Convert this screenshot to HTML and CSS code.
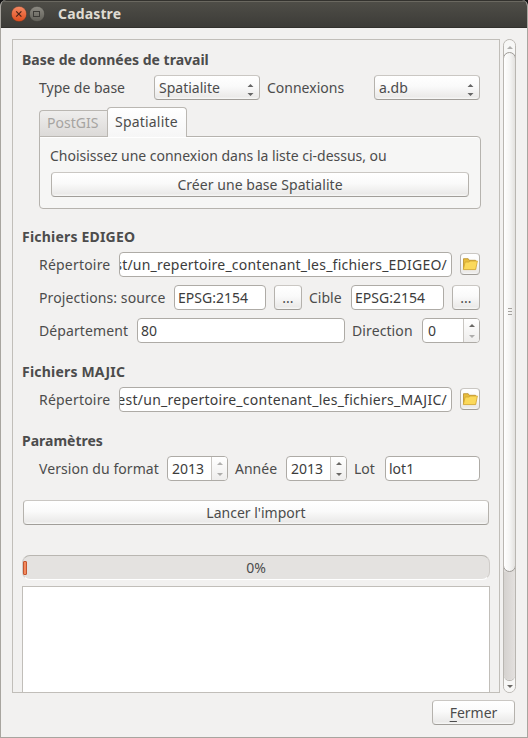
FILE: index.html
```html
<!DOCTYPE html>
<html lang="fr">
<head>
<meta charset="utf-8">
<title>Cadastre</title>
<link rel="stylesheet" href="styles.css">
</head>
<body>
<div class="window">
  <header class="titlebar">
    <svg class="winbtn" width="16" height="16" viewBox="0 0 16 16">
      <defs>
        <linearGradient id="orange" x1="0" y1="0" x2="0" y2="1"><stop offset="0" stop-color="#f58a64"/><stop offset="1" stop-color="#df4c1d"/></linearGradient>
        <linearGradient id="grey" x1="0" y1="0" x2="0" y2="1"><stop offset="0" stop-color="#8d8b83"/><stop offset="1" stop-color="#605f58"/></linearGradient>
      </defs>
      <circle cx="8" cy="8" r="7.7" fill="url(#orange)" stroke="#33322e" stroke-width=".5"/>
      <path d="M5.2 5.4l5.2 5.2M10.4 5.4l-5.2 5.2" stroke="#4a2317" stroke-width="1.2"/>
    </svg>
    <svg class="winbtn" width="16" height="16" viewBox="0 0 16 16">
      <circle cx="8" cy="8" r="7.7" fill="url(#grey)" stroke="#33322e" stroke-width=".5"/>
      <rect x="4.5" y="5.5" width="6" height="5" fill="none" stroke="#3b3a36"/>
    </svg>
    <span class="title">Cadastre</span>
  </header>
  <div class="main">
    <div class="area">
      <h2>Base de données de travail</h2>
      <div class="row">
        <span class="label w-type">Type de base</span>
        <div class="combo"><span>Spatialite</span><svg class="arrows" width="7" height="12" viewBox="0 0 7 12"><path d="M.5 3L3.5 0L6.5 3zM.5 9h6L3.5 12z"/></svg></div>
        <span class="label w-conn">Connexions</span>
        <div class="combo"><span>a.db</span><svg class="arrows" width="7" height="12" viewBox="0 0 7 12"><path d="M.5 3L3.5 0L6.5 3zM.5 9h6L3.5 12z"/></svg></div>
      </div>
      <div class="tabs">
        <div class="tabbar">
          <div class="tab"><span>PostGIS</span></div>
          <div class="tab active"><span class="t-spatialite">Spatialite</span></div>
        </div>
        <div class="pane">
          <p>Choisissez une connexion dans la liste ci-dessus, ou</p>
          <div class="button wide"><span class="t-create">Créer une base Spatialite</span></div>
        </div>
      </div>

      <h2 class="h-files">Fichiers EDIGEO</h2>
      <div class="row">
        <span class="label w-rep">Répertoire</span>
        <div class="field path"><span class="t-path1">st/un_repertoire_contenant_les_fichiers_EDIGEO/</span></div>
        <div class="folder"><svg width="16" height="14" viewBox="0 0 16 14"><path d="M1.5 12V1.7h4.7l1 1.6h6.3V12z" fill="#e8bd3e" stroke="#b78d27" stroke-width=".8"/><path d="M1.3 12.6L3.2 5h4l1-1h7.2l-1.7 8.6z" fill="#fbd95b" stroke="#d2a632" stroke-width=".8"/></svg></div>
      </div>
      <div class="row">
        <span class="label w-proj">Projections: source</span>
        <div class="field epsg"><span>EPSG:2154</span></div>
        <div class="button dots first">...</div>
        <span class="label w-cible">Cible</span>
        <div class="field epsg second"><span>EPSG:2154</span></div>
        <div class="button dots">...</div>
      </div>
      <div class="row">
        <span class="label w-dep">Département</span>
        <div class="field dep"><span>80</span></div>
        <span class="label w-dir">Direction</span>
        <div class="spin dir"><span class="num">0</span><span class="step down-off"><i class="up"></i><i class="down"></i></span></div>
      </div>

      <h2 class="h-files">Fichiers MAJIC</h2>
      <div class="row">
        <span class="label w-rep">Répertoire</span>
        <div class="field path"><span class="t-path2">est/un_repertoire_contenant_les_fichiers_MAJIC/</span></div>
        <div class="folder"><svg width="16" height="14" viewBox="0 0 16 14"><path d="M1.5 12V1.7h4.7l1 1.6h6.3V12z" fill="#e8bd3e" stroke="#b78d27" stroke-width=".8"/><path d="M1.3 12.6L3.2 5h4l1-1h7.2l-1.7 8.6z" fill="#fbd95b" stroke="#d2a632" stroke-width=".8"/></svg></div>
      </div>

      <h2>Paramètres</h2>
      <div class="row">
        <span class="label w-ver">Version du format</span>
        <div class="spin"><span class="num">2013</span><span class="step up-off down-off"><i class="up"></i><i class="down"></i></span></div>
        <span class="label w-annee">Année</span>
        <div class="spin"><span class="num">2013</span><span class="step"><i class="up"></i><i class="down"></i></span></div>
        <span class="label w-lot">Lot</span>
        <div class="field lot"><span>lot1</span></div>
      </div>

      <div class="button launch"><span>Lancer l'import</span></div>
      <div class="progress"><span class="chunk"></span><span class="pct">0%</span></div>
      <div class="log"></div>
    </div>
    <div class="scrollbar">
      <div class="trough-up"><i class="up"></i></div>
      <div class="thumb"><span class="grip"></span></div>
      <div class="trough"></div>
      <div class="trough-down"><i class="down"></i></div>
    </div>
  </div>
  <footer class="footer"><div class="button close"><span><u>F</u>ermer</span></div></footer>
</div>
</body>
</html>
```

FILE: styles.css
```css
* { box-sizing: border-box; }
body {
  margin: 0;
  background: #111;
  color: #4c4c4c;
  font: 14px/20px "Noto Sans", "Open Sans", sans-serif;
  white-space: nowrap;
}
.window {
  width: 528px;
  height: 738px;
  display: flex;
  flex-direction: column;
  background: #f2f1f0;
  border: 1px solid #a8a59f;
  border-top: 0;
  border-radius: 6px 6px 0 0;
  overflow: hidden;
}
.titlebar {
  height: 28px;
  flex: none;
  margin: 0 -1px;
  padding: 0 0 1px 11px;
  display: flex;
  align-items: center;
  background: linear-gradient(#4f4e48, #3c3b37);
  border-top: 1px solid #33322e;
  box-shadow: inset 0 1px #6a6860, inset 0 -1px #32312d;
}
.winbtn { margin-right: 2px; }
.title {
  margin-left: 11px;
  color: #dfdbd2;
  font-weight: 700;
  letter-spacing: .15px;
}
.main {
  display: flex;
  height: 654px;
  margin: 11px 0 0 11px;
  gap: 3px;
}
.area {
  width: 488px;
  height: 654px;
  overflow: hidden;
  border: 1px solid #c1beb9;
  padding: 10px 9px 0;
}
h2 {
  margin: 0 0 5px;
  height: 20px;
  font-size: 14px;
  line-height: 20px;
  font-weight: 700;
}
.h-files { letter-spacing: .2px; }
.row {
  display: flex;
  align-items: center;
  height: 25px;
  padding-left: 17px;
  margin-bottom: 8px;
}
.row + h2 { margin-top: 19px; }
.row .label { flex: none; }

.w-type { width: 115px; }
.w-conn { width: 107px; }
.w-rep { width: 80px; letter-spacing: .2px; }
.w-proj { width: 135px; letter-spacing: .1px; }
.w-cible { width: 42px; }
.w-dep { width: 98px; letter-spacing: .1px; }
.w-dir { width: 70px; letter-spacing: .1px; }
.w-ver { width: 128px; letter-spacing: .06px; }
.w-annee { width: 51px; }
.w-lot { width: 31px; }

.combo, .button, .folder {
  border: 1px solid #b5b2ad;
  border-top-color: #cac7c3;
  border-bottom-color: #a19e99;
  border-radius: 4px;
  background: linear-gradient(#fff, #fafafa 45%, #ebeae9 90%, #f8f8f7);
}
.combo {
  width: 106px;
  height: 25px;
  padding: 0 5px 0 4px;
  display: flex;
  align-items: center;
  justify-content: space-between;
}
.combo + .label { margin-left: 7px; }
.arrows { fill: #666; margin-top: 4px; }
.button {
  height: 25px;
  display: flex;
  align-items: center;
  justify-content: center;
}

.tabs { margin: -1px 0 18px 17px; width: 442px; }
.tabbar { position: relative; display: flex; align-items: flex-end; height: 30px; }
.tab {
  width: 68px;
  height: 27px;
  padding-left: 7px;
  line-height: 24px;
  color: #a6a4a1;
  border: 1px solid #bab7b2;
  border-right: 0;
  border-radius: 4px 0 0 0;
  background: linear-gradient(#efeeed, #dcdad8);
}
.tab.active {
  width: 80px;
  height: 30px;
  color: #4c4c4c;
  line-height: 28px;
  border-right: 1px solid #bab7b2;
  border-bottom: 0;
  border-radius: 4px 4px 0 0;
  background: linear-gradient(#fff, #f6f6f6);
}
.t-spatialite { letter-spacing: .2px; }
.t-create { letter-spacing: .05px; }
.pane {
  height: 73px;
  margin-top: -1px;
  padding: 9px 11px 0;
  border: 1px solid #b6b3ae;
  border-radius: 0 4px 4px 4px;
  background: #f6f6f5;
  box-shadow: inset 0 1px #fff;
}
.pane p { margin: 0 0 6px -1px; letter-spacing: -.02px; }

.field, .spin {
  height: 25px;
  display: flex;
  align-items: center;
  background: #fff;
  border: 1px solid #aeaba6;
  border-radius: 4px;
  color: #3c3c3c;
  overflow: hidden;
}
.field { padding: 0 3px; }
.path { width: 333px; justify-content: flex-end; padding: 0 4px 0 0; }
.t-path1 { letter-spacing: .22px; }
.t-path2 { letter-spacing: .26px; }
.folder {
  width: 20px;
  height: 22px;
  margin: 0 0 2px 8px;
  display: flex;
  align-items: center;
  justify-content: center;
}
.folder svg { flex: none; }
.epsg { width: 92px; }
.epsg.second { width: 93px; }
.dots { width: 28px; margin-left: 8px; }
.dots.first { margin-right: 7px; }
.dep { width: 208px; margin-right: 7px; }
.spin { width: 61px; }
.spin + .label { margin-left: 7px; }
.spin.dir { width: 58px; }
.num { flex: 1; padding-left: 4px; }
.dir .num { padding-left: 5px; }
.step {
  width: 16px;
  height: 23px;
  display: flex;
  flex-direction: column;
  align-items: center;
  justify-content: space-between;
  padding: 5px 0 4px;
  border-left: 1px solid #c9c6c2;
  background: linear-gradient(#fff, #eeedec);
}
i { border: 3px solid transparent; }
i.up { border-top: 0; border-bottom-color: #6a6865; }
i.down { border-bottom: 0; border-top-color: #6a6865; }
.up-off .up, .down-off .down { opacity: .5; }
.lot { width: 95px; }

.launch { width: 466px; margin-left: 1px; }
.row + .launch { margin-top: 19px; }
.progress {
  width: 468px;
  height: 25px;
  margin-top: 30px;
  display: flex;
  align-items: center;
  border-radius: 8px;
  background: #e4e2e0;
  border-top: 1px solid #b9b6b1;
  border-left: 1px solid #cfccc9;
  border-right: 1px solid #cfccc9;
  border-bottom: 1px solid #fff;
}
.chunk {
  width: 4px;
  height: 14px;
  border: 1px solid #c4552f;
  border-radius: 1px;
  background: #f28a5e;
}
.pct { flex: 1; text-align: center; padding-right: 4px; }
.log {
  width: 468px;
  height: 120px;
  margin-top: 6px;
  background: #fff;
  border: 1px solid #c1beb9;
}

.scrollbar {
  width: 13px;
  height: 654px;
  display: flex;
  flex-direction: column;
  border: 1px solid #b9b6b1;
  border-radius: 7px;
  background: #dfdcd9;
  overflow: hidden;
}
.trough-up, .trough-down {
  display: flex;
  align-items: center;
  justify-content: center;
  background: #f7f7f6;
}
.trough-up { height: 18px; margin-bottom: -6px; padding-bottom: 4px; }
.trough-up i { opacity: .5; }
.thumb {
  height: 520px;
  flex: none;
  margin: 0 -1px;
  display: flex;
  align-items: center;
  justify-content: center;
  border: 1px solid #9d9a96;
  border-radius: 7px;
  background: linear-gradient(90deg, #fff, #f4f4f3 55%, #e3e1df);
}
.grip {
  width: 4px;
  height: 7px;
  margin-top: -2px;
  background: repeating-linear-gradient(#a5a29e 0 1px, transparent 1px 3px);
}
.trough {
  flex: 1;
  z-index: 1;
  border-radius: 0 0 6px 6px;
  box-shadow: 0 1px #b9b6b1;
  background: linear-gradient(90deg, #d5d2cf, #e3e0de);
}
.trough-down { height: 18px; margin-top: -6px; padding-top: 6px; }
.footer { display: flex; justify-content: flex-end; padding: 7px 12px 0 0; }
.close { width: 83px; height: 25px; }
u { text-underline-offset: 3px; text-decoration-thickness: 1px; }
```
